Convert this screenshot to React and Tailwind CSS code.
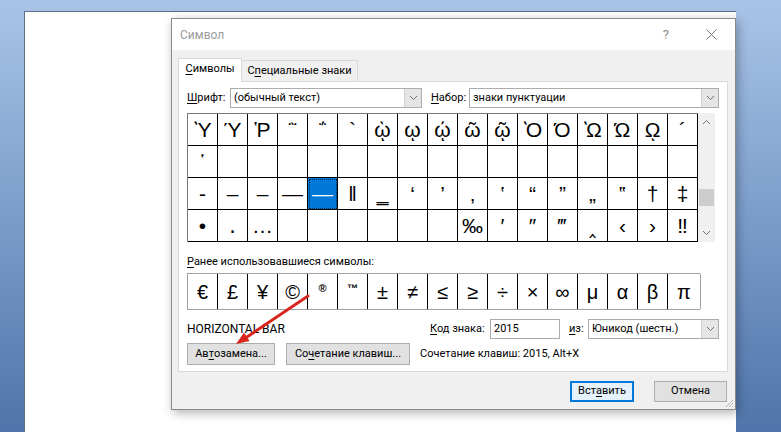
import React from 'react'

const ui = { fontFamily: 'Roboto, "Segoe UI", "Noto Sans", sans-serif' }
const glyphFont = { fontFamily: '"Liberation Sans", "DejaVu Sans", sans-serif' }

const row1 = ['Ὺ', 'Ύ', 'Ῥ', '῭', '΅', '`', 'ῲ', 'ῳ', 'ῴ', 'ῶ', 'ῷ', 'Ὸ', 'Ό', 'Ὼ', 'Ώ', 'ῼ', '´']
const row2 = ['῾', '', '', '', '', '', '', '', '', '', '', '', '', '', '', '', '']
const row3 = ['‑', '‒', '–', '—', '―', '‖', '‗', '‘', '’', '‚', '‛', '“', '”', '„', '‟', '†', '‡']
const row4 = ['•', '․', '…', '', '', '', '', '', '', '‰', '′', '″', '‴', '‸', '‹', '›', '‼']
const rows = [row1, row2, row3, row4]

const recent = ['€', '£', '¥', '©', '®', '™', '±', '≠', '≤', '≥', '÷', '×', '∞', 'μ', 'α', 'β', 'π']

const Chevron = ({ up }) => (
  <svg width="9" height="6" viewBox="0 0 9 6">
    <polyline
      points={up ? '1,5 4.5,1.5 8,5' : '1,1 4.5,4.5 8,1'}
      fill="none"
      stroke="#707070"
      strokeWidth="1"
    />
  </svg>
)

const Select = ({ value, width }) => (
  <div className={`flex h-[20px] shrink-0 items-stretch border border-[#acacac] bg-white ${width}`}>
    <div className="flex flex-1 items-center whitespace-nowrap pl-[3px] text-black">{value}</div>
    <div className="flex w-[17px] items-center justify-center border-l border-[#cfcfcf] bg-[#e5e5e5]">
      <Chevron />
    </div>
  </div>
)

const U = ({ children }) => <span className="underline underline-offset-2">{children}</span>

const CharGrid = () => (
  <div className="mt-[5px] flex">
    <div className="border-t border-l border-[#7a7a7a]" style={glyphFont}>
      {rows.map((r, ri) => (
        <div key={ri} className="grid grid-cols-[repeat(17,30px)]">
          {r.map((c, ci) => {
            const sel = ri === 2 && ci === 4
            return (
              <div
                key={ci}
                className={`flex h-[32px] items-center justify-center border-r border-b border-black text-[21px] leading-none ${
                  sel ? 'bg-[#0078d7] text-white outline-1 outline-dotted -outline-offset-2 outline-[#0a2a4a]' : 'text-black'
                }`}
              >
                {c}
              </div>
            )
          })}
        </div>
      ))}
    </div>
    <div className="flex h-[129px] w-[17px] flex-col items-center bg-[#f0f0f0] py-[6px]">
      <Chevron up />
      <div className="mt-[64px] h-[17px] w-[15px] bg-[#cdcdcd]" />
      <div className="flex-1" />
      <Chevron />
    </div>
  </div>
)

const RecentGrid = () => (
  <div
    className="mt-[3px] grid w-[513px] grid-cols-[repeat(16,30px)_33px] border-t border-l border-b border-[#a0a0a0]"
    style={glyphFont}
  >
    {recent.map((c, i) => {
      const small = c === '®' || c === '™'
      return (
        <div
          key={i}
          className={`flex h-[35px] justify-center border-r text-black ${
            i === 16 ? 'border-[#a0a0a0]' : 'border-black'
          } ${small ? 'items-start pt-[6px] text-[11px] font-bold' : 'items-center text-[20px]'}`}
        >
          {c}
        </div>
      )
    })}
  </div>
)

const Button = ({ children, width, primary }) => (
  <div
    className={`flex shrink-0 items-center justify-center whitespace-nowrap text-black ${width} ${
      primary ? 'border-2 border-[#0078d7] bg-[#e5f1fb]' : 'border border-[#adadad] bg-[#e1e1e1]'
    }`}
  >
    {children}
  </div>
)

export default function App() {
  return (
    <div
      className="relative h-[432px] w-[781px] overflow-hidden bg-gradient-to-b from-[#a9c4e6] via-[#7c9dcb] to-[#4f74a9] text-[11px]"
      style={ui}
    >
      {/* document page */}
      <div className="absolute left-[24px] top-[11px] h-[430px] w-[712px] border-t border-l border-[#5c6f88] bg-white" />

      {/* dialog window */}
      <div className="absolute left-[171px] top-[18px] flex h-[392px] w-[565px] flex-col border border-[#8a8a8a] bg-[#f0f0f0] shadow-[2px_3px_10px_rgba(0,0,0,0.3)]">
        <div className="flex h-[31px] items-center bg-white pl-[8px] pr-[18px]">
          <span className="text-[12px] text-[#9b9b9b]">Символ</span>
          <span className="ml-auto text-[13px] text-[#8a8a8a]">?</span>
          <svg className="ml-[37px]" width="11" height="11" viewBox="0 0 11 11">
            <path d="M0.5 0.5 L10.5 10.5 M10.5 0.5 L0.5 10.5" stroke="#777" strokeWidth="1" />
          </svg>
        </div>

        <div className="px-[6px] pt-[8px]">
          {/* tabs */}
          <div className="relative z-10 flex h-[24px] items-end whitespace-nowrap text-black">
            <div className="flex h-[24px] w-[64px] items-center justify-center border border-b-0 border-[#d9d9d9] bg-white pb-[2px]">
              <U>С</U>имволы
            </div>
            <div className="mb-[1px] flex h-[21px] w-[116px] items-center justify-center border border-l-0 border-b-0 border-[#d9d9d9] bg-[#f0f0f0]">
              С<U>п</U>ециальные знаки
            </div>
          </div>

          {/* tab panel */}
          <div className="-mt-[1px] h-[291px] w-[550px] whitespace-nowrap border border-[#d9d9d9] bg-white pl-[8px] pr-[7px] pt-[6px] text-black">
            <div className="flex items-center">
              <span className="w-[43px] shrink-0">
                <U>Ш</U>рифт:
              </span>
              <Select value="(обычный текст)" width="w-[192px]" />
              <span className="ml-[9px] w-[38px] shrink-0">
                <U>Н</U>абор:
              </span>
              <Select value="знаки пунктуации" width="w-[250px]" />
            </div>

            <CharGrid />

            <div className="mt-[12px] h-[16px] leading-[16px]">
              <U>Р</U>анее использовавшиеся символы:
            </div>
            <RecentGrid />

            <div className="mt-[9px] flex items-center">
              <span className="w-[243px] shrink-0 text-[12px]">HORIZONTAL BAR</span>
              <span className="w-[60px] shrink-0">
                <U>К</U>од знака:
              </span>
              <div className="flex h-[20px] w-[70px] shrink-0 items-center border border-[#acacac] bg-white pl-[3px]">2015</div>
              <span className="ml-[9px] w-[19px] shrink-0">
                <U>и</U>з:
              </span>
              <Select value="Юникод (шестн.)" width="w-[131px]" />
            </div>

            <div className="mt-[4px] flex h-[22px] items-stretch">
              <Button width="w-[88px]">
                Ав<U>т</U>озамена...
              </Button>
              <div className="ml-[11px] flex">
                <Button width="w-[124px]">
                  Со<U>ч</U>етание клавиш...
                </Button>
              </div>
              <span className="ml-[10px] self-center">Сочетание клавиш: 2015, Alt+X</span>
            </div>
          </div>

          {/* bottom buttons */}
          <div className="mt-[9px] flex h-[21px] justify-end pr-[2px]">
            <Button width="w-[64px]" primary>
              Вст<U>а</U>вить
            </Button>
            <div className="ml-[20px] flex">
              <Button width="w-[73px]">Отмена</Button>
            </div>
          </div>
        </div>

        {/* resize grip */}
        <svg className="absolute bottom-[1px] right-[1px]" width="10" height="10" viewBox="0 0 10 10">
          <path d="M9 2 L2 9 M9 5 L5 9 M9 8 L8 9" stroke="#b5b5b5" strokeWidth="1" />
        </svg>
      </div>

      {/* red annotation arrow */}
      <svg className="pointer-events-none absolute left-0 top-0" width="781" height="432">
        <line x1="308" y1="296" x2="247" y2="337" stroke="#d8261f" strokeWidth="3" strokeLinecap="round" />
        <polygon points="236,344 249.6,341 244,332.6" fill="#d8261f" />
      </svg>
    </div>
  )
}
